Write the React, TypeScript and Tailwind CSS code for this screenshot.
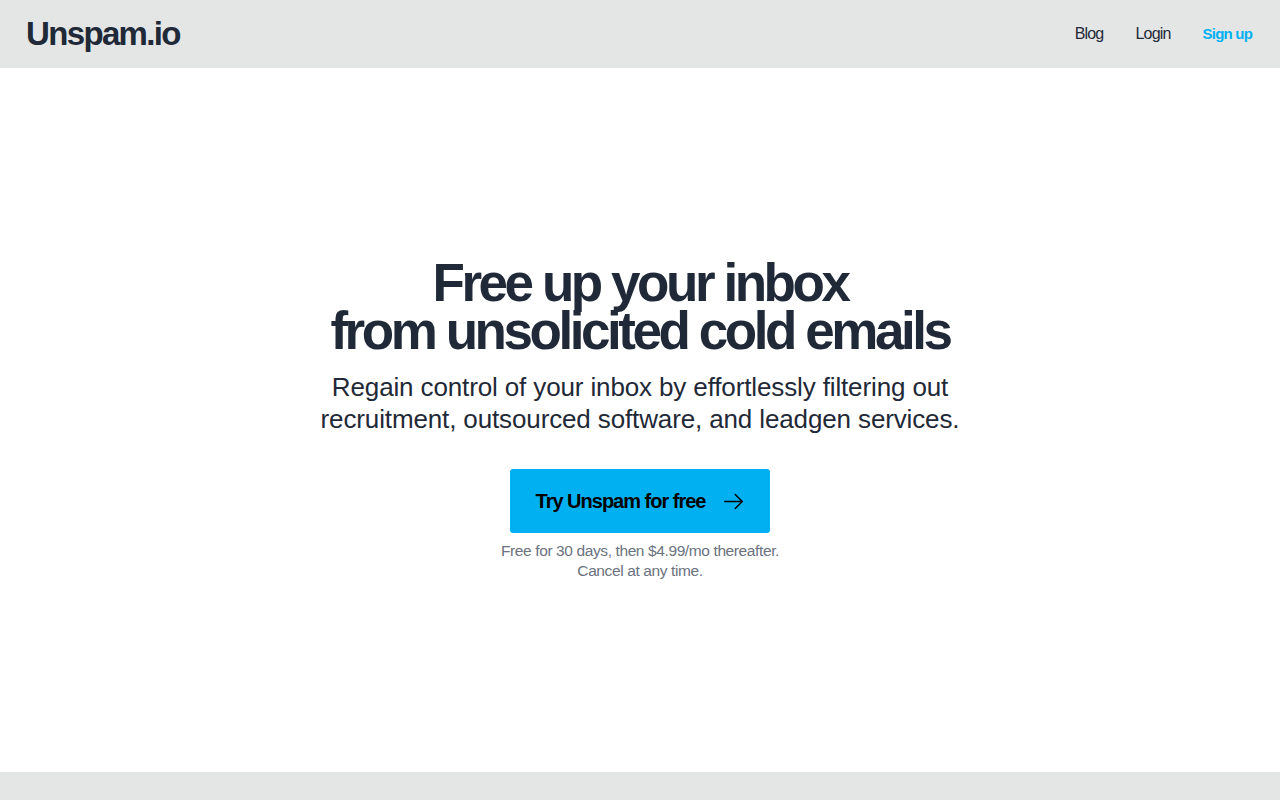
import React from 'react';

const font = { fontFamily: '"Liberation Sans", Arial, sans-serif' };

export default function App() {
  return (
    <div className="flex h-screen flex-col bg-white text-[#1f2937]" style={font}>
      <header className="flex h-[68px] items-center justify-between bg-[#e4e6e6] pl-[26px] pr-[28px]">
        <a className="text-[33px] font-bold tracking-[-0.05em] text-[#1f2937]">Unspam.io</a>
        <nav className="flex items-center gap-8 text-base tracking-[-0.05em]">
          <a className="text-[#1f2937]">Blog</a>
          <a className="text-[#1f2937]">Login</a>
          <a className="text-[15px] font-bold text-[#00b0f0]">Sign up</a>
        </nav>
      </header>

      <main className="flex flex-1 flex-col items-center justify-center text-center">
        <h1 className="text-[53px] font-bold leading-[48px] tracking-[-0.065em]">
          Free up your inbox
          <br />
          from unsolicited cold emails
        </h1>
        <p className="mt-4 text-[26px] leading-8 tracking-[-0.005em]">
          Regain control of your inbox by effortlessly filtering out
          <br />
          recruitment, outsourced software, and leadgen services.
        </p>
        <a className="mt-[34px] flex h-16 items-center gap-[18px] rounded-[3px] bg-[#00b0f0] pl-[26px] pr-[26px] text-xl font-bold tracking-[-0.05em] text-black">
          Try Unspam for free
          <svg width="21" height="21" viewBox="0 0 24 24" fill="none" stroke="currentColor" strokeWidth="1.7" strokeLinecap="round" strokeLinejoin="round">
            <path d="M2 12h20" />
            <path d="M14 4l8 8-8 8" />
          </svg>
        </a>
        <p className="mt-2 text-[15.5px] leading-5 tracking-[-0.025em] text-[#6b7280]">
          Free for 30 days, then $4.99/mo thereafter.
          <br />
          Cancel at any time.
        </p>
      </main>

      <footer className="h-[28px] bg-[#e4e6e6]" />
    </div>
  );
}
